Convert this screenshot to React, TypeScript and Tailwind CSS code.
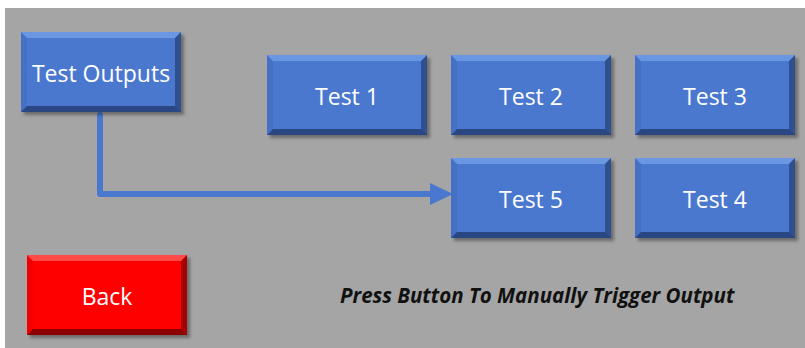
import React from 'react';

type Tone = 'blue' | 'red';

const bevel: Record<Tone, string> = {
  blue: 'bg-[#4a78cf] border-t-[#6a96e2] border-l-[#4470c6] border-r-[#2f4f8e] border-b-[#2a4783]',
  red: 'bg-[#ff0000] border-t-[#ff4a4a] border-l-[#f20000] border-r-[#a80000] border-b-[#8c0000]',
};

const PanelButton: React.FC<{ label: string; tone?: Tone; className?: string }> = ({ label, tone = 'blue', className = '' }) => (
  <button
    className={`relative z-10 flex h-[80px] w-[160px] items-center justify-center border-[6px] border-solid pt-[2px] text-[23px] leading-none text-white shadow-[3px_3px_3px_rgba(0,0,0,0.35)] ${bevel[tone]} ${className}`}
    style={{ fontFamily: '"Open Sans", Lato, sans-serif' }}
  >
    {label}
  </button>
);

const Arrow: React.FC = () => (
  <svg className="absolute left-0 top-0 pointer-events-none" width="800" height="340">
    <path d="M95 107 V186 H428" fill="none" stroke="#4a78cf" strokeWidth="6" strokeLinecap="round" strokeLinejoin="round" />
    <polygon points="425,175 448,186 425,197" fill="#4a78cf" />
  </svg>
);

export default function App() {
  return (
    <div className="h-[348px] w-[805px] bg-white pl-[5px] pt-[8px]">
      <div className="relative h-[340px] w-[800px] bg-[#a5a5a5]">
        <Arrow />
        <div className="flex">
          <PanelButton label="Test Outputs" className="ml-[16px] mt-[24px]" />
          <div className="ml-[86px] mt-[47px] grid grid-cols-[160px_160px_160px] gap-x-[24px] gap-y-[23px]">
            <PanelButton label="Test 1" />
            <PanelButton label="Test 2" />
            <PanelButton label="Test 3" />
            <div />
            <PanelButton label="Test 5" />
            <PanelButton label="Test 4" />
          </div>
        </div>
        <div className="mt-[17px] flex items-center">
          <PanelButton label="Back" tone="red" className="ml-[22px]" />
          <p
            className="ml-[153px] text-[20.5px] font-bold italic text-[#111]"
            style={{ fontFamily: '"Open Sans", Lato, sans-serif' }}
          >
            Press Button To Manually Trigger Output
          </p>
        </div>
      </div>
    </div>
  );
}
